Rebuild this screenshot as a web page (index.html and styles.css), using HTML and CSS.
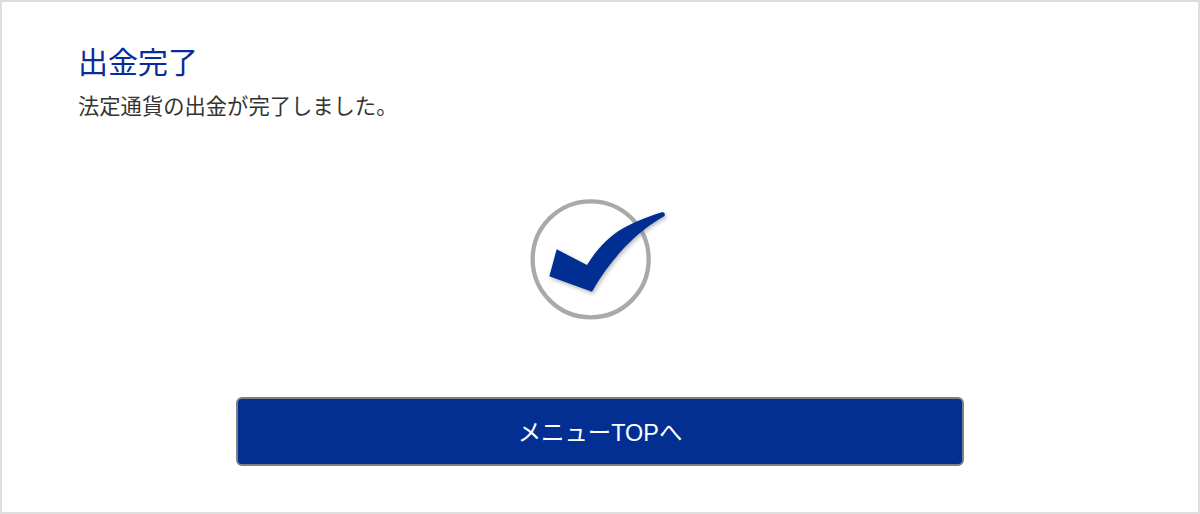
FILE: index.html
```html
<!DOCTYPE html>
<html lang="ja">
<head>
<meta charset="utf-8">
<title>出金完了</title>
<link rel="stylesheet" href="styles.css">
</head>
<body>
<main class="panel">
  <header class="intro">
    <h1 class="title">出金完了</h1>
    <p class="message">法定通貨の出金が完了しました。</p>
  </header>
  <div class="status">
    <svg class="status-icon" viewBox="0 0 540 420" width="180" height="140" aria-hidden="true">
      <defs>
        <filter id="soft" x="-10%" y="-10%" width="120%" height="120%">
          <feGaussianBlur stdDeviation="2"/>
        </filter>
        <filter id="shade" x="-20%" y="-20%" width="140%" height="140%">
          <feGaussianBlur stdDeviation="6"/>
        </filter>
      </defs>
      <circle cx="242" cy="208" r="174" fill="#fff" stroke="#a9a9a9" stroke-width="13" filter="url(#soft)"/>
      <path d="M140 178L231 225C258 180 296 138 342 113C385 90 425 76 458 66Q468 69 463 79C420 102 378 137 344 172C304 214 272 260 246 305L118 259Z" fill="#777" opacity=".55" transform="translate(4 6)" filter="url(#shade)"/>
      <path d="M140 178L231 225C258 180 296 138 342 113C385 90 425 76 458 66Q468 69 463 79C420 102 378 137 344 172C304 214 272 260 246 305L118 259Z" fill="#032f92" filter="url(#soft)"/>
    </svg>
  </div>
  <div class="actions">
    <a class="button" href="#">メニューTOPへ</a>
  </div>
</main>
</body>
</html>
```
FILE: styles.css
```css
* {
  box-sizing: border-box;
}

html,
body {
  margin: 0;
  height: 100%;
  background: #fff;
}

body {
  font-family: "Liberation Sans", "Noto Sans CJK JP", sans-serif;
  color: #333;
}

.panel {
  height: 514px;
  border: 2px solid #dedede;
  padding: 42px 76px 0;
}

.title {
  margin: 0;
  font-size: 30px;
  line-height: 38px;
  font-weight: 400;
  color: #0a2c9a;
}

.message {
  margin: 11px 0 0;
  font-size: 21.3px;
  line-height: 28px;
}

.status {
  display: flex;
  justify-content: center;
  margin-top: 69px;
}

.status-icon {
  display: block;
}

.actions {
  display: flex;
  justify-content: center;
  margin-top: 67px;
}

.button {
  display: flex;
  align-items: center;
  justify-content: center;
  width: 728px;
  height: 69px;
  padding-bottom: 2px;
  border: 2px solid #7f7f85;
  border-radius: 6px;
  background: #032f92;
  color: #fff;
  font-size: 23.4px;
  text-decoration: none;
}
```
